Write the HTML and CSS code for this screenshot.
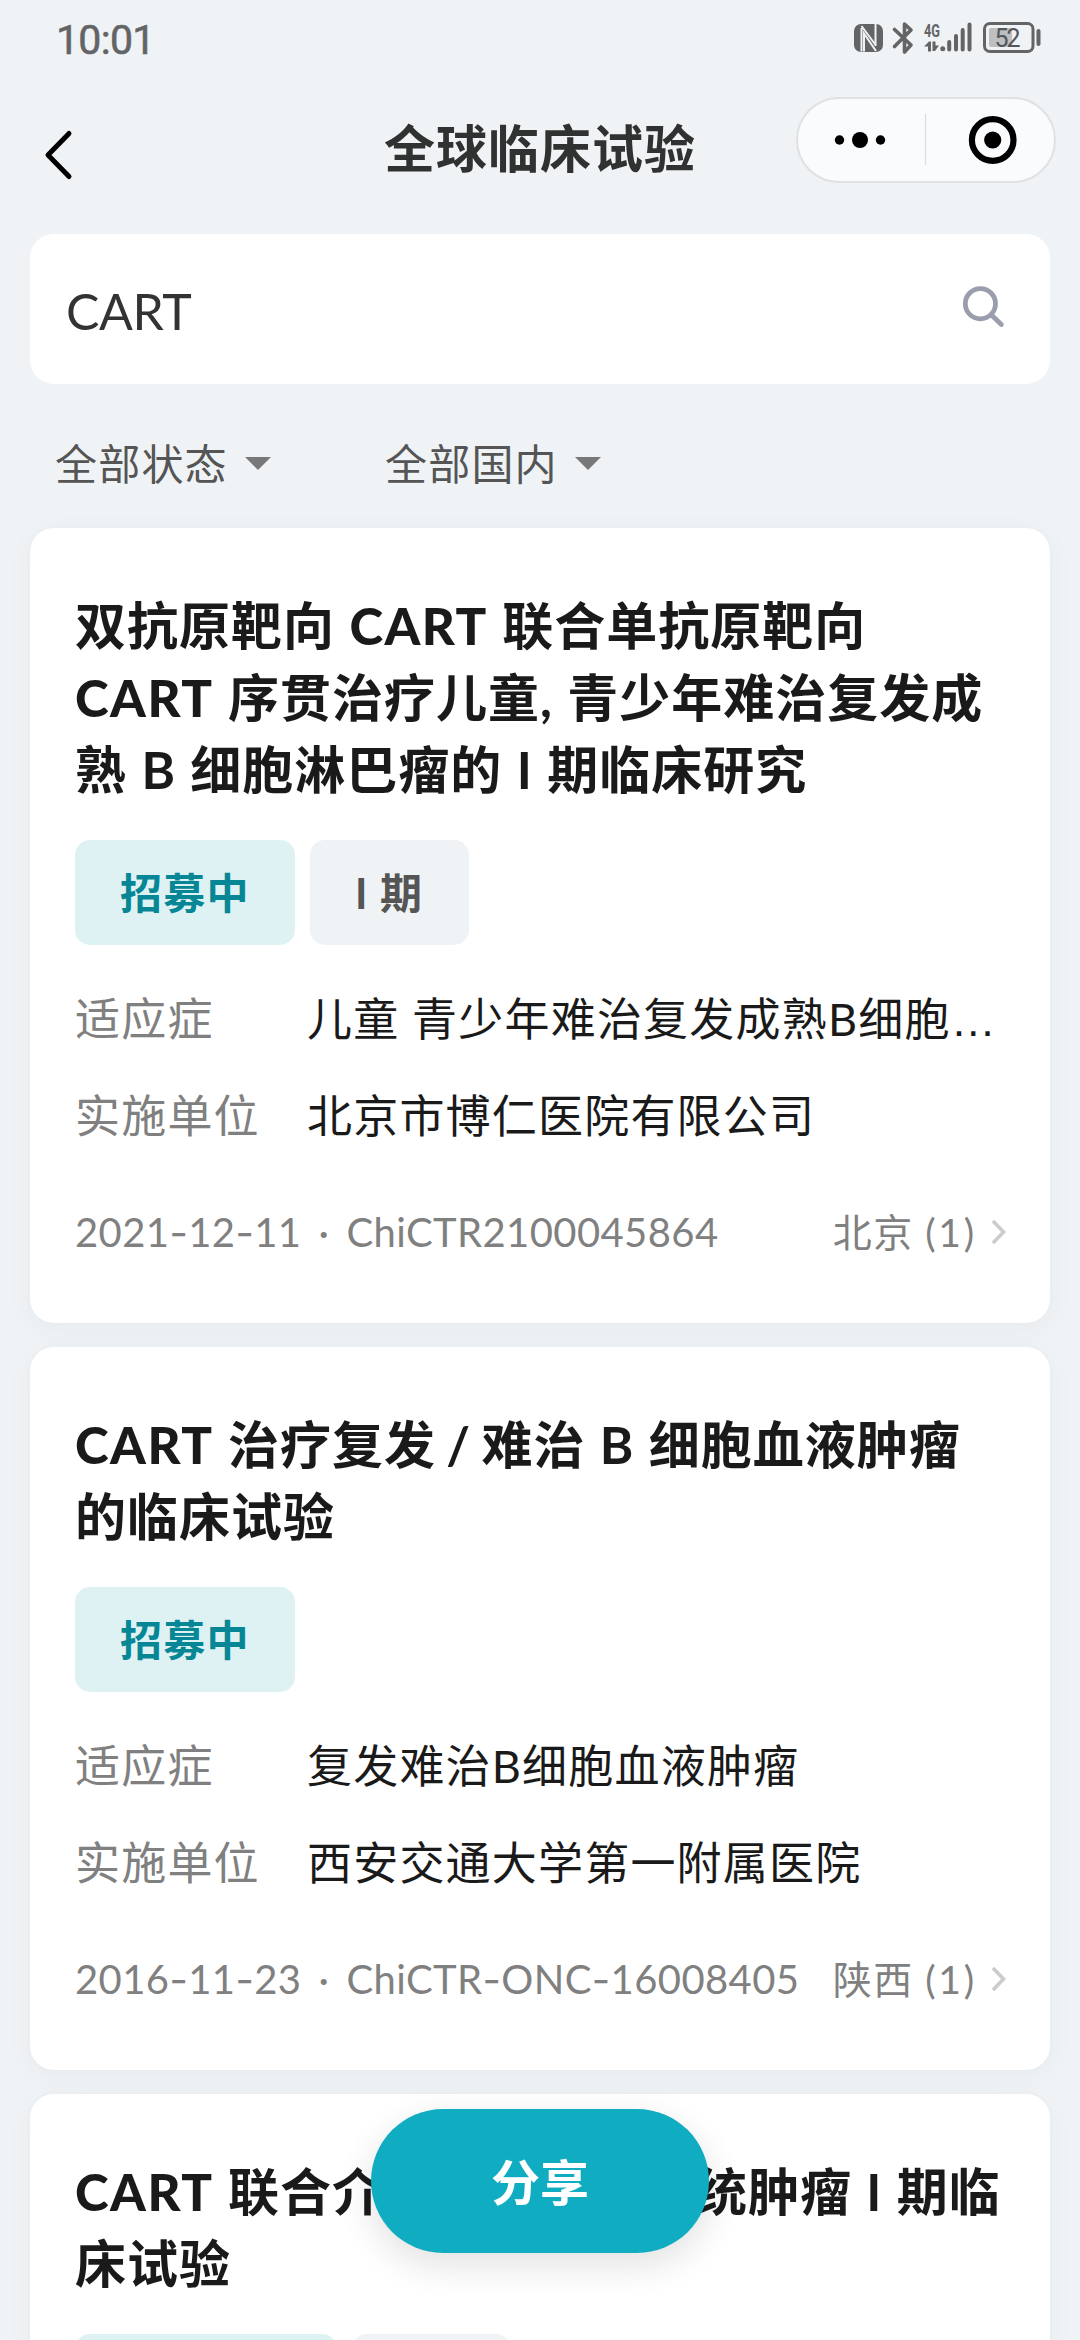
FILE: index.html
```html
<!DOCTYPE html>
<html lang="zh-CN">
<head>
<meta charset="utf-8">
<title>全球临床试验</title>
<link rel="stylesheet" href="styles.css">
</head>
<body>
<div class="screen">
  <div class="status">
    <span class="clock">10:01</span>
    <svg class="status-icons" width="190" height="36" viewBox="852 20 190 36" aria-hidden="true">
      <rect x="854" y="24" width="29" height="28" rx="7" fill="#636466"/>
      <path d="M861.500 51.500V28M861.500 26l14.500 19.500M875.500 46V24M864 51.500V33.500L876 51" fill="none" stroke="#eff3f6" stroke-width="2"/>
      <path d="M894.500 29.500L911 45l-6.500 7V24l6.500 6-16.500 16.500" fill="none" stroke="#636466" stroke-width="3.600" stroke-linecap="round" stroke-linejoin="round"/>
      <text x="924" y="36.500" class="net" textLength="16" lengthAdjust="spacingAndGlyphs">4G</text>
      <path d="M924 46.500l5-5h2v10h-3v-5zM932.500 41.500h3v4h3.500l-4 5.500h-2.500z" fill="#636466"/>
      <circle cx="942.700" cy="48.800" r="2.500" fill="#636466"/>
      <path d="M949.200 42v7.500M956 36v13.500M962.700 30v19.500M969.500 24.500v25" stroke="#636466" stroke-width="4" stroke-linecap="round"/>
      <rect x="984.500" y="23.500" width="48.500" height="28" rx="5.500" fill="none" stroke="#636466" stroke-width="3"/>
      <rect x="989" y="28" width="23" height="19" rx="2" fill="#bdbfc1"/>
      <text x="994.500" y="46.500" class="batt" textLength="26">52</text>
      <rect x="1036.500" y="29" width="4" height="17" rx="2" fill="#636466"/>
    </svg>
  </div>

  <header class="nav">
    <svg class="back" width="30" height="54" viewBox="44 128 30 54"><path d="M69 133.500L48 155l21 21.500" fill="none" stroke="#000" stroke-width="5" stroke-linecap="round" stroke-linejoin="round"/></svg>
    <h1>全球临床试验</h1>
    <div class="capsule">
      <svg width="256" height="82" viewBox="798 99 256 82">
        <circle cx="839.500" cy="140" r="4.700"/><circle cx="860" cy="140" r="8"/><circle cx="880.500" cy="140" r="4.700"/>
        <path d="M925.500 114v51" stroke="#dcdee0" stroke-width="1.300"/>
        <circle cx="992.700" cy="140" r="20.800" fill="none" stroke="#000" stroke-width="6.200"/><circle cx="992.700" cy="140" r="8.600"/>
      </svg>
    </div>
  </header>

  <div class="search">
    <span>CART</span>
    <svg width="46" height="46" viewBox="960 286 46 46"><g fill="none" stroke="#9a9dab" stroke-width="4.800" stroke-linecap="round"><circle cx="980.400" cy="303.700" r="15.100"/><path d="M992 315.500l9.300 9"/></g></svg>
  </div>

  <div class="filters">
    <div class="filter">全部状态<i></i></div>
    <div class="filter">全部国内<i></i></div>
  </div>

  <main class="list">
    <article class="card">
      <h2><span class="line">双抗原靶向 <b>CART</b> 联合单抗原靶向</span><span class="line"><b>CART</b> 序贯治疗儿童, 青少年难治复发成</span><span class="line">熟 B 细胞淋巴瘤的 I 期临床研究</span></h2>
      <div class="tags"><span class="tag open">招募中</span><span class="tag phase">I 期</span></div>
      <dl>
        <dt>适应症</dt><dd>儿童 青少年难治复发成熟B细胞<span class="more">…</span></dd>
        <dt>实施单位</dt><dd>北京市博仁医院有限公司</dd>
      </dl>
      <div class="meta"><span class="date">2021<s>-</s>12<s>-</s>11</span><span class="dot">·</span><span class="code">ChiCTR2100045864</span><span class="place">北京 <em>(1)</em></span><svg width="16" height="26" viewBox="0 0 16 26"><path d="M2 2l10.500 11L2 24" fill="none" stroke="#ccc" stroke-width="3.600"/></svg></div>
    </article>

    <article class="card">
      <h2><span class="line"><b>CART</b> 治疗复发<span class="slash"> / </span>难治 B 细胞血液肿瘤</span><span class="line">的临床试验</span></h2>
      <div class="tags"><span class="tag open">招募中</span></div>
      <dl>
        <dt>适应症</dt><dd>复发难治B细胞血液肿瘤</dd>
        <dt>实施单位</dt><dd>西安交通大学第一附属医院</dd>
      </dl>
      <div class="meta"><span class="date">2016<s>-</s>11<s>-</s>23</span><span class="dot">·</span><span class="code">ChiCTR<s>-</s>ONC<s>-</s>16008405</span><span class="place">陕西 <em>(1)</em></span><svg width="16" height="26" viewBox="0 0 16 26"><path d="M2 2l10.500 11L2 24" fill="none" stroke="#ccc" stroke-width="3.600"/></svg></div>
    </article>

    <article class="card">
      <h2><span class="line"><b>CART</b> 联合介入治疗神经系统肿瘤 I 期临</span><span class="line">床试验</span></h2>
      <div class="tags"><span class="tag open wide"></span><span class="tag phase"></span></div>
    </article>
  </main>

  <button class="share">分享</button>
</div>
</body>
</html>
```

FILE: styles.css
```css
* { box-sizing: border-box; margin: 0; padding: 0; }
body {
  background: #eff3f6;
  font-family: Lato, "Noto Sans CJK SC", sans-serif;
  color: #1a1a1a;
}
.screen { position: relative; width: 1080px; height: 2340px; overflow: hidden; display: flex; flex-direction: column; }

.status { height: 80px; padding: 0 38px 4px 56px; display: flex; align-items: center; justify-content: space-between; flex: none; }
.clock { font: 400 41px/56px Roboto, sans-serif; color: #636466; letter-spacing: -.7px; padding-top: 4px; -webkit-text-stroke: .6px #636466; }
.net { font: 700 18px Roboto, sans-serif; fill: #636466; }
.batt { font: 400 25px Roboto, sans-serif; fill: #55565a; }

.nav { height: 154px; padding: 17px 24px 0 44px; display: grid; grid-template-columns: 260px 1fr 260px; align-items: start; flex: none; }
.back { margin-top: 31px; }
.nav h1 { font-size: 51px; line-height: 72px; letter-spacing: 1px; text-align: center; color: #303231; white-space: nowrap; margin: 16px 0 0 -20px; }
.capsule { width: 260px; height: 86px; border: 2px solid #dfe1e3; border-radius: 43px; background: #f9fbfd; }
.capsule svg { display: block; }

.search { height: 150px; margin: 0 30px; padding: 0 44px 0 36px; border-radius: 24px; background: #fff; display: flex; align-items: center; justify-content: space-between; flex: none; }
.search span { font-size: 50px; line-height: 72px; letter-spacing: -.4px; color: #333; padding-top: 3px; }

.filters { height: 144px; padding: 15px 55px 0; display: flex; align-items: center; flex: none; }
.filter { width: 330px; display: flex; align-items: center; font-size: 42px; letter-spacing: 1.200px; line-height: 60px; color: #555; }
.filter i { margin-left: 17px; border: 13px solid transparent; border-top-color: #77787a; border-bottom: 0; }

.list { display: flex; flex-direction: column; gap: 24px; padding: 0 30px; }
.card { background: #fff; border-radius: 24px; padding: 62px 45px 0; height: 795px; flex: none; box-shadow: 0 0 6px rgba(0,0,0,.025), 0 6px 30px rgba(0,0,0,.035); }
.card:nth-child(n+2) { height: 723px; }
h2 { font-size: 51px; line-height: 72px; letter-spacing: 1px; word-spacing: 1px; font-weight: 700; }
h2 b { letter-spacing: 1.500px; }
.slash { word-spacing: -3px; }
.line { display: block; white-space: nowrap; }
.tags { display: flex; gap: 15px; margin-top: 34px; }
.tag { height: 105px; min-width: 159px; padding: 0 45px; border-radius: 15px; font-weight: 700; font-size: 42px; letter-spacing: 1.200px; line-height: 106px; white-space: nowrap; }
.open { background: #dff2f3; color: #078795; width: 220px; }
.phase { background: #eff3f6; color: #555; width: 159px; }
.wide { width: 262px; }
dl { display: grid; grid-template-columns: 232px 1fr; row-gap: 25px; margin-top: 38px; font-size: 45px; line-height: 72px; letter-spacing: 1.200px; }
dt { color: #808080; }
dd { white-space: nowrap; }
.more { font-family: "Liberation Sans", sans-serif; line-height: 1; }
.meta { display: flex; align-items: center; height: 60px; margin-top: 50px; font-size: 40px; line-height: 60px; letter-spacing: .4px; color: #808080; white-space: nowrap; }
.meta s { font-family: Inter, sans-serif; text-decoration: none; line-height: 1; }
.dot { width: 45px; text-align: center; }
.place { margin-left: auto; font-size: 39px; letter-spacing: 1.500px; margin-right: 14px; }
.place em { font-style: normal; letter-spacing: 2.800px; }
.meta svg { margin-right: -2px; }

.share { position: absolute; left: 371px; top: 2109px; width: 338px; height: 144px; border: 0; border-radius: 72px; background: #10adc2; color: #fff; font: 700 49px/147px Lato, "Noto Sans CJK SC", sans-serif; box-shadow: 0 12px 36px rgba(0,0,0,.12); }
```
